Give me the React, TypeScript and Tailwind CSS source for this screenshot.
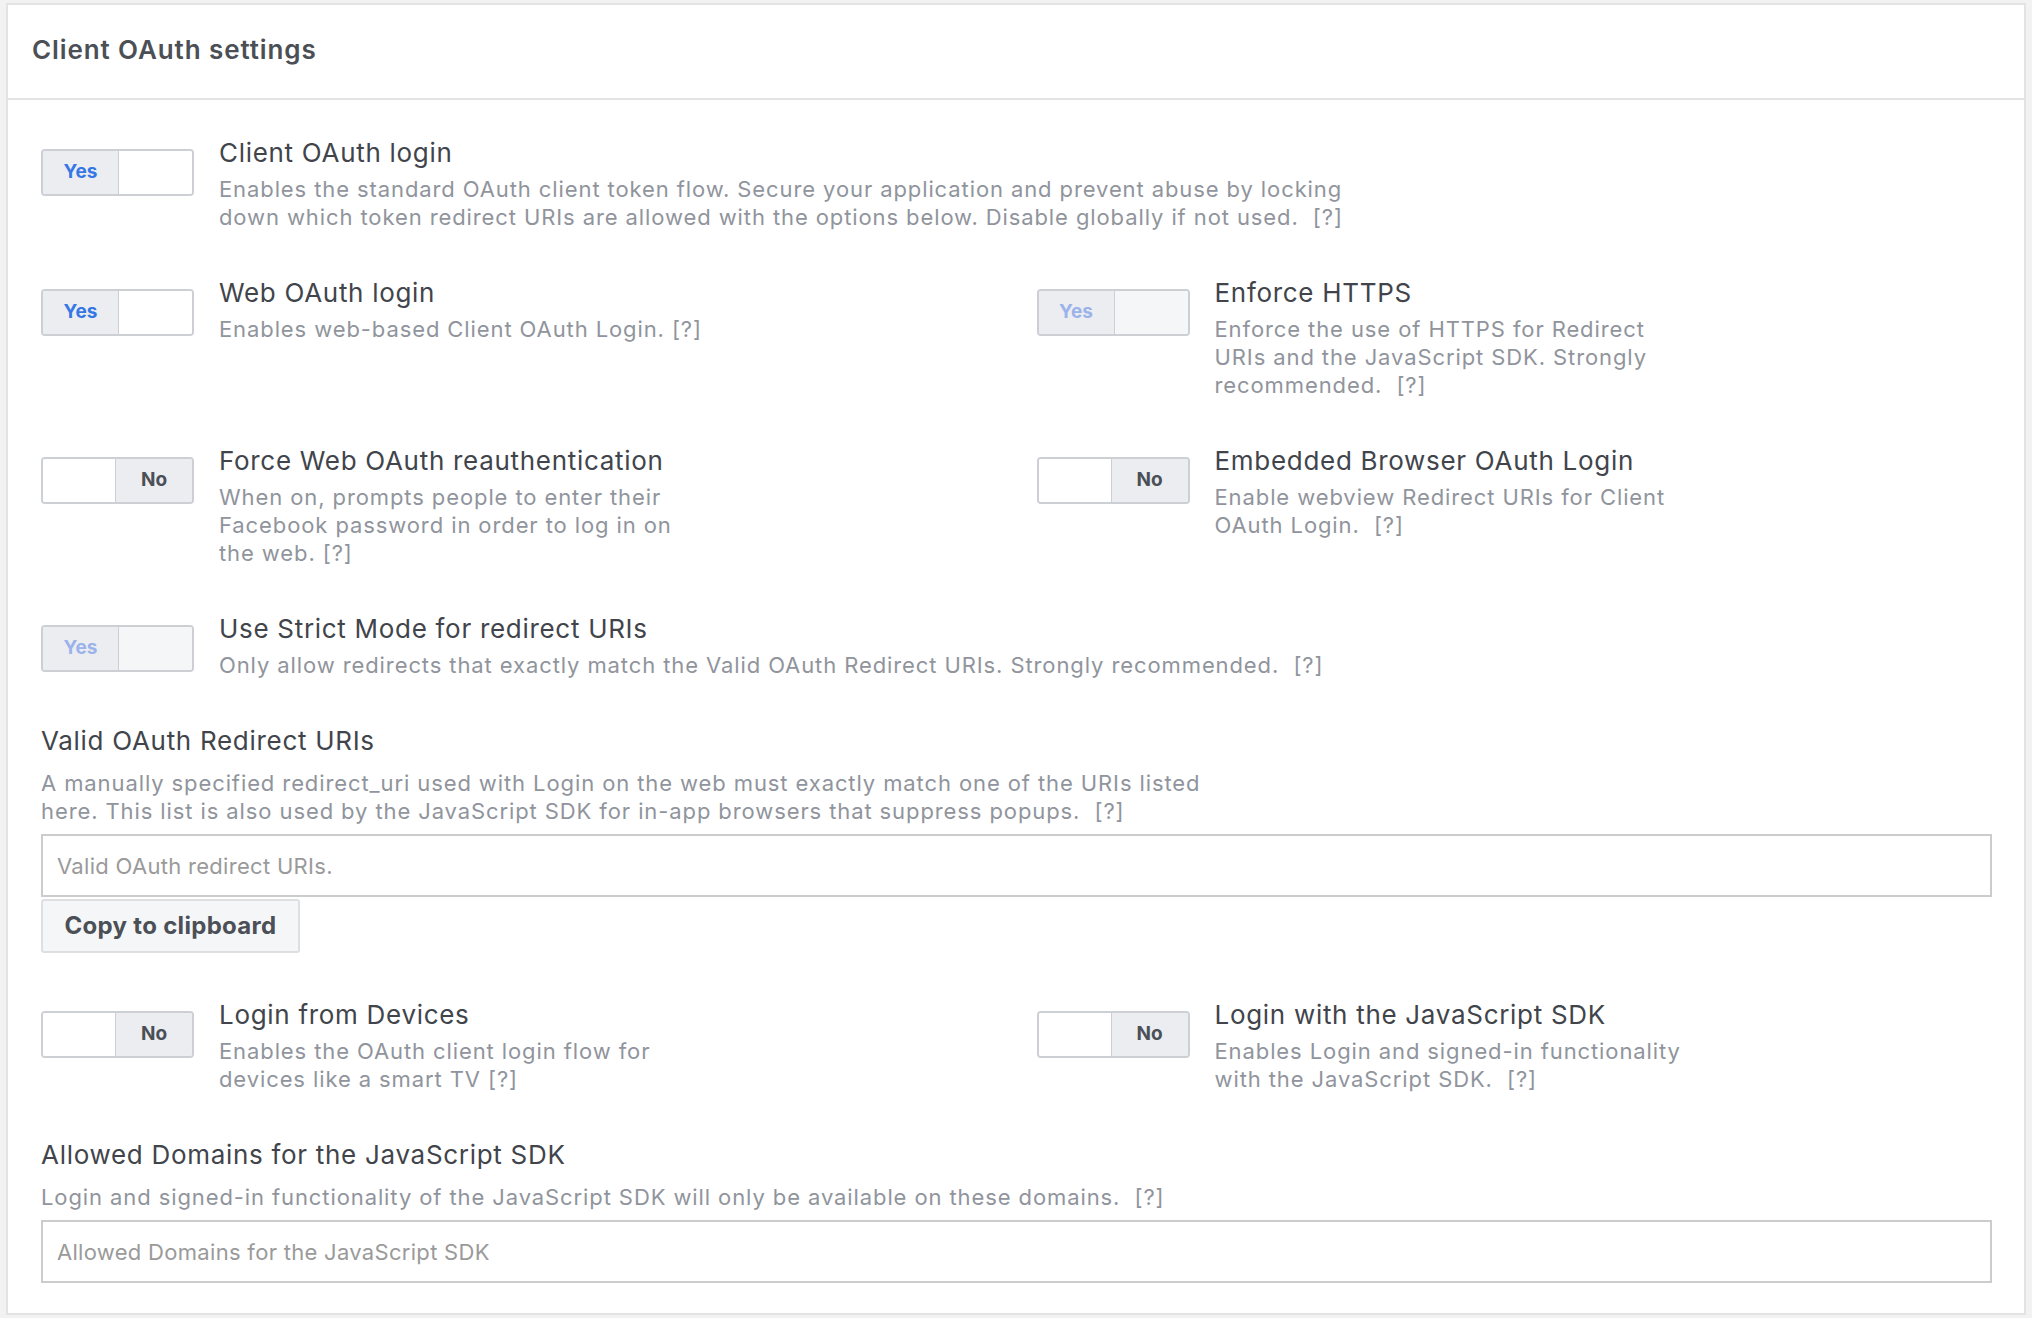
import React from "react";

type ToggleProps = { on: boolean; disabled?: boolean };

function Toggle({ on, disabled }: ToggleProps) {
  const base = "flex items-center justify-center w-[76px] text-[19px] font-bold";
  return (
    <div className="mt-[12px] flex h-[47px] w-[153px] shrink-0 overflow-hidden rounded-[4px] border-2 border-[#ccd0d5]">
      {on ? (
        <>
          <div className={`${base} border-r border-[#ccd0d5] bg-[#ebedf0] ${disabled ? "text-[#9bb3ea]" : "text-[#3578e5]"}`}>
            Yes
          </div>
          <div className={`flex-1 ${disabled ? "bg-[#f5f6f7]" : "bg-white"}`} />
        </>
      ) : (
        <>
          <div className="flex-1 border-r border-[#ccd0d5] bg-white" />
          <div className={`${base} bg-[#ebedf0] text-[#4b4f56]`}>No</div>
        </>
      )}
    </div>
  );
}

type SettingProps = {
  title: string;
  desc: string;
  on: boolean;
  disabled?: boolean;
  wide?: boolean;
};

function Setting({ title, desc, on, disabled, wide }: SettingProps) {
  return (
    <div className="flex items-start gap-[25px]">
      <Toggle on={on} disabled={disabled} />
      <div>
        <div className="text-[26px] leading-[32px] tracking-[0.7px] text-[#41454b]">{title}</div>
        <div
          className={`mt-[6px] text-[22px] leading-[28px] tracking-[0.9px] text-[#90949c] ${
            wide ? "max-w-[1175px]" : "max-w-[486px]"
          }`}
        >
          {desc}
        </div>
      </div>
    </div>
  );
}

function FieldBlock({ label, desc, placeholder }: { label: string; desc: string; placeholder: string }) {
  return (
    <div>
      <div className="text-[26px] leading-[32px] tracking-[0.7px] text-[#41454b]">{label}</div>
      <div className="mt-[12px] max-w-[1175px] text-[22px] leading-[28px] tracking-[0.9px] text-[#90949c]">{desc}</div>
      <input
        className="mt-[9px] block h-[63px] w-full border-2 border-[#cccccc] bg-white px-[14px] text-[22px] tracking-[0.3px] text-[#1d2129] outline-none placeholder:text-[#9a9a9a]"
        placeholder={placeholder}
      />
    </div>
  );
}

const q = "\u00a0 [?]";

export default function App() {
  return (
    <div className="min-h-screen bg-[#f2f2f2] pt-[3px] font-['Inter',sans-serif]">
      <div className="ml-[6px] w-[2020px] border-2 border-[#e3e3e3] bg-white">
        <div className="flex h-[95px] items-center border-b-2 border-[#e3e3e3] pb-[4px] pl-[24px]">
          <h2 className="text-[26px] font-semibold tracking-[0.9px] text-[#4b4f56]">Client OAuth settings</h2>
        </div>

        <div className="flex flex-col gap-[46px] pb-[30px] pl-[33px] pr-[32px] pt-[37px]">
          <Setting
            on
            wide
            title="Client OAuth login"
            desc={`Enables the standard OAuth client token flow. Secure your application and prevent abuse by locking down which token redirect URIs are allowed with the options below. Disable globally if not used.${q}`}
          />

          <div className="grid grid-cols-2 gap-x-[40px]">
            <Setting on title="Web OAuth login" desc="Enables web-based Client OAuth Login. [?]" />
            <Setting
              on
              disabled
              title="Enforce HTTPS"
              desc={`Enforce the use of HTTPS for Redirect URIs and the JavaScript SDK. Strongly recommended.${q}`}
            />
          </div>

          <div className="grid grid-cols-2 gap-x-[40px]">
            <Setting
              on={false}
              title="Force Web OAuth reauthentication"
              desc="When on, prompts people to enter their Facebook password in order to log in on the web. [?]"
            />
            <Setting
              on={false}
              title="Embedded Browser OAuth Login"
              desc={`Enable webview Redirect URIs for Client OAuth Login.${q}`}
            />
          </div>

          <Setting
            on
            disabled
            wide
            title="Use Strict Mode for redirect URIs"
            desc={`Only allow redirects that exactly match the Valid OAuth Redirect URIs. Strongly recommended.${q}`}
          />

          <div>
            <FieldBlock
              label="Valid OAuth Redirect URIs"
              desc={`A manually specified redirect_uri used with Login on the web must exactly match one of the URIs listed here. This list is also used by the JavaScript SDK for in-app browsers that suppress popups.${q}`}
              placeholder="Valid OAuth redirect URIs."
            />
            <button className="mt-[2px] h-[54px] w-[259px] rounded-[3px] border-2 border-[#dddfe2] bg-[#f5f6f7] text-[24px] font-bold tracking-[0.3px] text-[#4b4f56]">
              Copy to clipboard
            </button>
          </div>

          <div className="grid grid-cols-2 gap-x-[40px]">
            <Setting
              on={false}
              title="Login from Devices"
              desc="Enables the OAuth client login flow for devices like a smart TV [?]"
            />
            <Setting
              on={false}
              title="Login with the JavaScript SDK"
              desc={`Enables Login and signed-in functionality with the JavaScript SDK.${q}`}
            />
          </div>

          <FieldBlock
            label="Allowed Domains for the JavaScript SDK"
            desc={`Login and signed-in functionality of the JavaScript SDK will only be available on these domains.${q}`}
            placeholder="Allowed Domains for the JavaScript SDK"
          />
        </div>
      </div>
    </div>
  );
}
